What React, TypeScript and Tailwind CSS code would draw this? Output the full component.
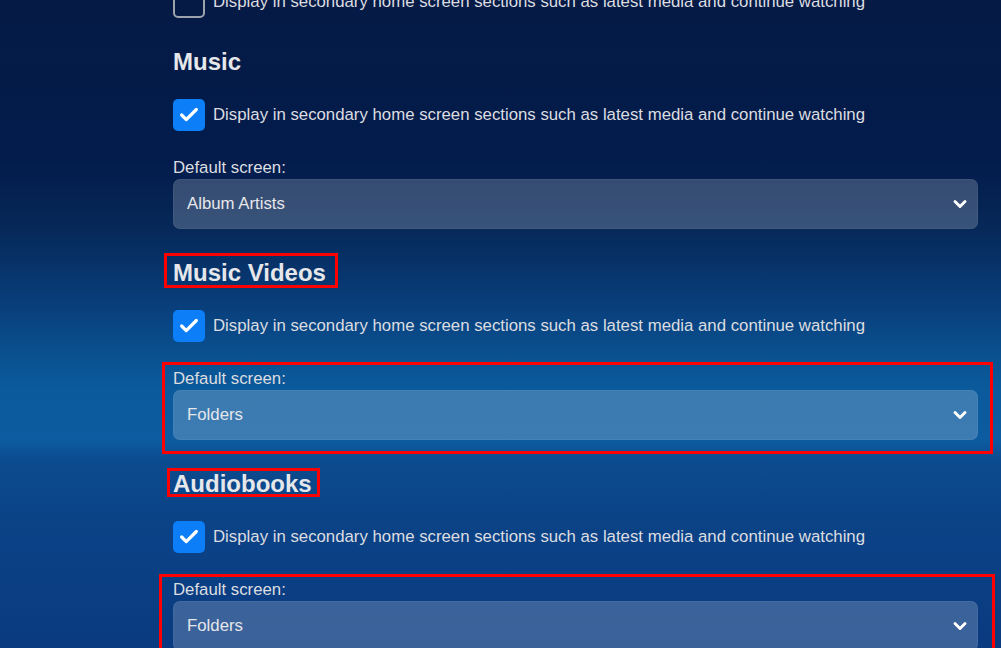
import { ChevronDown, Check } from 'lucide-react';

type Section = {
  title: string,
  screen: string,
};

const sections: Section[] = [
  { title: 'Music', screen: 'Album Artists' },
  { title: 'Music Videos', screen: 'Folders' },
  { title: 'Audiobooks', screen: 'Folders' },
];

const secondaryText = 'Display in secondary home screen sections such as latest media and continue watching';

function Checkbox({ checked }: { checked: boolean }) {
  if (!checked) {
    return <div className="w-8 h-8 shrink-0 rounded-[5px] border-2 border-[#9da3ad]" />;
  }
  return (
    <div className="w-8 h-8 shrink-0 rounded-[5px] bg-[#0c7ef7] flex items-center justify-center">
      <Check className="w-[22px] h-[22px] text-white" strokeWidth={3.5} />
    </div>
  );
}

function CheckRow({ checked }: { checked: boolean }) {
  return (
    <label className="flex items-center gap-2 h-8">
      <Checkbox checked={checked} />
      <span className="text-[16.8px] leading-5 text-[#dcdde0]">{secondaryText}</span>
    </label>
  );
}

function SectionBlock({ title, screen }: Section) {
  return (
    <div className="pt-[27px]">
      <h2 className="text-[24px] leading-[34px] font-bold text-[#e6e7ea]">{title}</h2>
      <div className="mt-5">
        <CheckRow checked />
      </div>
      <div className="mt-[27px]">
        <div className="text-[16.8px] leading-5 text-[#dcdde0] mb-[1px]">Default screen:</div>
        <div className="h-[50px] rounded-[7px] bg-white/20 border border-white/5 flex items-center justify-between pl-[13px] pr-[7px]">
          <span className="text-[16.8px] text-[#e6e7ea]">{screen}</span>
          <ChevronDown className="w-5 h-5 text-white" strokeWidth={3.5} />
        </div>
      </div>
    </div>
  );
}

export default function App() {
  return (
    <div
      className="relative w-[1001px] h-[648px] overflow-hidden font-['Liberation_Sans',Arial,sans-serif] bg-[linear-gradient(180deg,#051a45_0%,#031c4c_25%,#062858_35%,#083c78_46%,#0a5190_55%,#0a5a9c_60%,#0d5ba0_68%,#0c4b8e_71%,#0b4387_80%,#0a3a80_100%)]"
    >
      <div className="ml-[173px] w-[805px] -mt-[14px]">
        <CheckRow checked={false} />
        {sections.map((s) => (
          <SectionBlock key={s.title} {...s} />
        ))}
      </div>

      {/* red annotation boxes */}
      <div className="absolute left-[164px] top-[253px] w-[174px] h-[35px] border-[3px] border-[#ff0000]" />
      <div className="absolute left-[162px] top-[362px] w-[831px] h-[92px] border-[3px] border-[#ff0000]" />
      <div className="absolute left-[167px] top-[468px] w-[153px] h-[29px] border-[3px] border-[#ff0000]" />
      <div className="absolute left-[159px] top-[574px] w-[836px] h-[100px] border-[3px] border-[#ff0000]" />
    </div>
  );
}
